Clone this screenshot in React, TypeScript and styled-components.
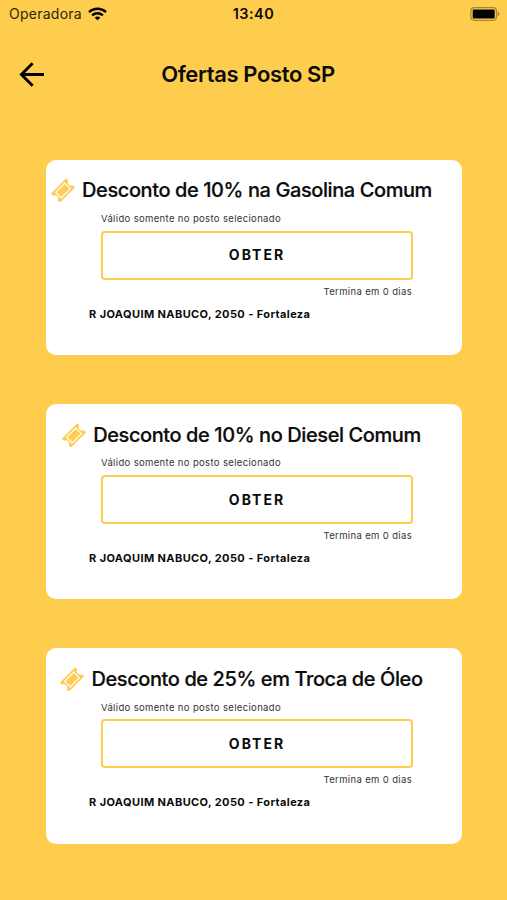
import React from "react";
import styled, { createGlobalStyle } from "styled-components";

const YELLOW = "#ffcd4e";

const GlobalStyle = createGlobalStyle`
  * { box-sizing: border-box; }
  body {
    margin: 0;
    background: ${YELLOW};
    font-family: Inter, "Liberation Sans", sans-serif;
    color: #0c0c0c;
  }
`;

const Screen = styled.main`
  height: 900px;
  background: ${YELLOW};
  overflow: hidden;
`;

const StatusBar = styled.div`
  display: grid;
  grid-template-columns: 1fr auto 1fr;
  align-items: center;
  height: 27px;
  padding: 0 7px 0 9px;
`;

const Carrier = styled.div`
  display: flex;
  align-items: center;
  gap: 6px;
  font-size: 14px;
  letter-spacing: 0.25px;
  color: #30270f;
`;

const Clock = styled.div`
  font-size: 14.5px;
  font-weight: 600;
  letter-spacing: 0.45px;
  padding-right: 2px;
`;

const BatterySlot = styled.div`
  display: flex;
  justify-content: flex-end;
`;

const Header = styled.header`
  display: grid;
  grid-template-columns: 32px 1fr 32px;
  align-items: center;
  height: 93px;
  padding: 0 16px 0 16px;
`;

const BackButton = styled.button`
  display: flex;
  border: 0;
  padding: 0;
  background: none;
  color: #000;
`;

const Title = styled.h1`
  margin: 0;
  padding-right: 11px;
  text-align: center;
  font-size: 22px;
  line-height: 28px;
  font-weight: 600;
  letter-spacing: -0.38px;
  white-space: nowrap;
`;

const OfferList = styled.section`
  display: flex;
  flex-direction: column;
  gap: 49px;
  padding: 39.7px 45px 0 46px;
`;

const Card = styled.article`
  display: flex;
  flex-direction: column;
  height: 195.35px;
  padding-top: 15.7px;
  border-radius: 10px;
  background: #fff;
`;

const CardHeading = styled.div`
  display: flex;
  align-items: center;
  justify-content: center;
  gap: 7px;
  height: 30px;
  padding-right: 25px;
`;

const CardTitle = styled.h2`
  margin: 0;
  font-size: 20px;
  line-height: 28px;
  font-weight: 500;
  letter-spacing: -0.41px;
  white-space: nowrap;
  -webkit-text-stroke: 0.2px currentColor;
`;

const Note = styled.p<{ $end?: boolean }>`
  margin: ${(p) => (p.$end ? "5px 50px 0 0" : "6.6px 0 4.7px 55px")};
  text-align: ${(p) => (p.$end ? "right" : "left")};
  font-size: 9.5px;
  line-height: 14px;
  letter-spacing: 0.35px;
  color: #333;
`;

const GetButton = styled.button`
  width: 312px;
  height: 49px;
  margin-left: 55px;
  padding: 0;
  border: 2px solid ${YELLOW};
  border-radius: 4px;
  background: #fff;
  color: #0c0c0c;
  font: 700 14px/20px Inter, sans-serif;
  letter-spacing: 2px;
  flex-shrink: 0;
`;

const Address = styled.p`
  margin: 7px 0 0 43px;
  font-size: 11px;
  line-height: 16px;
  font-weight: 700;
  letter-spacing: 0.4px;
`;

const WifiIcon = () => (
  <svg width="19" height="14" viewBox="0 0 19 14" fill="none" stroke="#000" strokeWidth="2.3">
    <path d="M1 5.2C5.8.6 13.2.6 18 5.2" />
    <path d="M4.1 8.4c3.1-2.9 7.7-2.9 10.8 0" />
    <path d="M9.5 13.3 6.7 10.7c1.6-1.5 4-1.5 5.6 0Z" fill="#000" stroke="none" />
  </svg>
);

const BatteryIcon = () => (
  <svg width="30" height="14" viewBox="0 0 30 14">
    <rect x=".9" y=".7" width="25.6" height="12.6" rx="3.5" fill="none" stroke="#a68532" strokeWidth="1.2" />
    <rect x="2.7" y="2.5" width="22" height="9" rx="1.2" fill="#000" />
    <path d="M27.7 4.7c2.2.7 2.2 3.9 0 4.6Z" fill="#a68532" />
  </svg>
);

const ArrowIcon = () => (
  <svg width="32" height="32" viewBox="0 0 32 32" fill="none" stroke="currentColor" strokeWidth="2.9">
    <path d="M28 16.5H6M16.6 5.3 5.4 16.5l11.2 11.2" />
  </svg>
);

const TicketIcon = () => (
  <svg width="24" height="24" viewBox="0 0 24 24">
    <g transform="rotate(-45 12 12.5)">
      <path
        d="M1.2 6.1h21.6v3.2a3.3 3.3 0 0 0 0 6.4v3.2H1.2v-3.2a3.3 3.3 0 0 0 0-6.4Z"
        fill="#ffcc55"
      />
      <rect x="5.6" y="8.5" width="12.8" height="8" fill="#ffcc55" stroke="#fff" strokeWidth="1.1" />
    </g>
  </svg>
);

const offers = [
  "Desconto de 10% na Gasolina Comum",
  "Desconto de 10% no Diesel Comum",
  "Desconto de 25% em Troca de Óleo",
];

export default function App() {
  return (
    <Screen>
      <GlobalStyle />
      <StatusBar>
        <Carrier>
          Operadora
          <WifiIcon />
        </Carrier>
        <Clock>13:40</Clock>
        <BatterySlot>
          <BatteryIcon />
        </BatterySlot>
      </StatusBar>
      <Header>
        <BackButton aria-label="Voltar">
          <ArrowIcon />
        </BackButton>
        <Title>Ofertas Posto SP</Title>
      </Header>
      <OfferList>
        {offers.map((offer) => (
          <Card key={offer}>
            <CardHeading>
              <TicketIcon />
              <CardTitle>{offer}</CardTitle>
            </CardHeading>
            <Note>Válido somente no posto selecionado</Note>
            <GetButton>OBTER</GetButton>
            <Note $end>Termina em 0 dias</Note>
            <Address>R JOAQUIM NABUCO, 2050 - Fortaleza</Address>
          </Card>
        ))}
      </OfferList>
    </Screen>
  );
}
